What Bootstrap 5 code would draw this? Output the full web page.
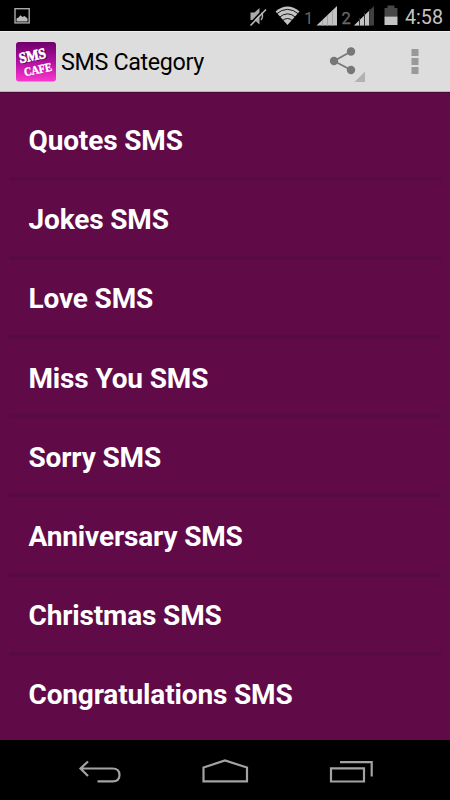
<!DOCTYPE html>
<html lang="en">
<head>
<meta charset="utf-8">
<meta name="viewport" content="width=device-width, initial-scale=1">
<title>SMS Category</title>
<link href="https://cdn.jsdelivr.net/npm/bootstrap@5.3.0/dist/css/bootstrap.min.css" rel="stylesheet">
<style>
body { font-family: Roboto, "Noto Sans", sans-serif; background: #000; }
.screen { width: 450px; height: 800px; }
.status-bar { height: 31px; background: #000; }
.action-bar { height: 61px; background: #ddd; border-top: 1px solid #efefef; border-bottom: 1px solid #b9b9b9; padding: 0 14px; }
.app-title { font-size: 23.3px; line-height: 28px; letter-spacing: -.35px; color: #000; margin-left: 3px; padding-top: 1px; white-space: nowrap; }
.categories { background: #600b48; padding: 8.5px 9px 0; border-top: 1px solid #4a0837; }
.categories .list-group-item { height: 79.2px; padding: 4px 0 0 19.5px; background: transparent; color: #fff; border: 0; border-bottom: 4px solid #580b43; font-size: 28px; line-height: 34px; letter-spacing: -.15px; font-weight: 700; white-space: nowrap; }
.categories .list-group-item:last-child { border-bottom: 4px solid transparent; }
.nav-keys { height: 60px; background: #000; }
</style>
</head>
<body>
<main class="screen d-flex flex-column overflow-hidden">
  <header class="status-bar flex-shrink-0 d-flex justify-content-between">
    <svg width="40" height="31" viewBox="0 0 40 31" role="img" aria-label="Screenshot saved">
      <rect x="15" y="8.7" width="14.2" height="14.2" fill="none" stroke="#aaa" stroke-width="1.4"/>
      <path d="M16.500 21.500v-3l2-1 2-2.300 2 1.800 2-1 3 2.500v3z" fill="#bbb"/>
    </svg>
    <svg width="210" height="31" viewBox="240 0 210 31" role="img" aria-label="Muted, Wi-Fi, two signals, battery, 4:58" font-family="Roboto, sans-serif">
      <path d="M250.500 12.500h4l5-4.500v16.500l-5-4.500h-4z" fill="#aaa"/>
      <path d="M261 12q3 4 0 8" fill="none" stroke="#aaa" stroke-width="1.500"/>
      <path d="M249 24.500 264.500 8.500" stroke="#000" stroke-width="1.500"/>
      <path d="M250.500 25.500 266 9.500" stroke="#bbb" stroke-width="1.600"/>
      <path d="M275.500 11.500Q287.500 1.500 299.500 11.500L287.500 25z" fill="#c4c4c4"/>
      <path d="M276 14.200Q287.500 4.500 299 14.200M279 17.600Q287.500 10 296 17.600M282 21Q287.500 16 293 21" fill="none" stroke="#000" stroke-width=".9"/>
      <text x="304" y="24" font-size="16.500" fill="#666">1</text>
      <path d="M316.500 25.500 337 6v19.500z" fill="#c2c2c2"/>
      <path d="M322.500 20v6M327.500 15v11M332.500 10v16" stroke="#999" stroke-width=".8"/>
      <text x="341.500" y="24" font-size="16.500" fill="#666" stroke="#666" stroke-width=".3">2</text>
      <path d="M354 25.500 374 6v19.500z" fill="#404040"/>
      <path d="M354 25.500 369 11v14.500z" fill="#c4c4c4"/>
      <path d="M359.500 18v8M364.500 13v13M369.500 9v17" stroke="#333" stroke-width="1"/>
      <path d="M384.500 8h3V5.500h7V8h3v8.500h-13z" fill="#474747"/>
      <path d="M384.500 16.500h13V25h-13z" fill="#c4c4c4"/>
      <text x="405" y="23.500" font-size="20.500" fill="#c4c4c4" textLength="38" lengthAdjust="spacingAndGlyphs">4:58</text>
    </svg>
  </header>

  <nav class="action-bar flex-shrink-0 d-flex align-items-center">
    <svg class="overflow-visible" width="44" height="44" viewBox="14 40 44 44" role="img" aria-label="SMS Cafe">
      <defs><linearGradient id="logo" x2="0" y2="1"><stop stop-color="#6e006a"/><stop offset=".5" stop-color="#b0109f"/><stop offset="1" stop-color="#fb38d0"/></linearGradient></defs>
      <rect x="16" y="42" width="40" height="39.500" rx="3" fill="url(#logo)"/>
      <g font-family="'Liberation Serif', serif" font-weight="700">
        <g transform="rotate(-12 33 56)" stroke-width=".7"><text x="20" y="61.500" font-size="15" fill="#40003d" textLength="27" lengthAdjust="spacingAndGlyphs">SMS</text>
        <text x="19" y="60.500" font-size="15" fill="#fff" stroke="#fff" textLength="27" lengthAdjust="spacingAndGlyphs">SMS</text></g>
        <text x="25" y="76.300" font-size="12" fill="#fff" stroke="#fff" stroke-width=".4" textLength="28" lengthAdjust="spacingAndGlyphs" transform="rotate(-12 25 76.300)">CAFE</text>
      </g>
    </svg>
    <h1 class="app-title mb-0 fw-normal">SMS Category</h1>
    <svg class="ms-auto" width="108" height="58" viewBox="328 33 108 58" role="img" aria-label="Share and more options">
      <path d="M351 51.500 334 61l17 9" fill="none" stroke="#777" stroke-width="1.700"/>
      <g fill="#777"><circle cx="351" cy="51.500" r="4.200"/><circle cx="334" cy="61" r="4.200"/><circle cx="351" cy="70" r="4.200"/></g>
      <path d="M365 71.500V82h-10.500z" fill="#b2b2b2"/>
      <path d="M411.500 49h7v7h-7zm0 9h7v7h-7zm0 9h7v7h-7z" fill="#999"/>
    </svg>
  </nav>

  <section class="categories flex-grow-1 overflow-hidden">
    <ul class="list-group list-group-flush">
      <li class="list-group-item d-flex align-items-center">Quotes SMS</li>
      <li class="list-group-item d-flex align-items-center">Jokes SMS</li>
      <li class="list-group-item d-flex align-items-center">Love SMS</li>
      <li class="list-group-item d-flex align-items-center">Miss You SMS</li>
      <li class="list-group-item d-flex align-items-center">Sorry SMS</li>
      <li class="list-group-item d-flex align-items-center">Anniversary SMS</li>
      <li class="list-group-item d-flex align-items-center">Christmas SMS</li>
      <li class="list-group-item d-flex align-items-center">Congratulations SMS</li>
    </ul>
  </section>

  <footer class="nav-keys flex-shrink-0">
    <svg width="450" height="60" viewBox="0 740 450 60" fill="none" stroke="#a3a3a3" stroke-width="2.200" role="img" aria-label="Back, home, recent apps">
      <path d="M80.500 768.500H112.500Q119.500 768.500 119.500 775T112.500 781.300H97.500M88 761.500 80.500 768.500 88 776"/>
      <path d="M203.500 781.300V767.500L225 760.500 247 767.500V781.300z"/>
      <path d="M331 768.300h33v13.200h-33zM340 762.200h31.700V776.500"/>
    </svg>
  </footer>
</main>
<script src="https://cdn.jsdelivr.net/npm/bootstrap@5.3.0/dist/js/bootstrap.bundle.min.js"></script>
</body>
</html>
